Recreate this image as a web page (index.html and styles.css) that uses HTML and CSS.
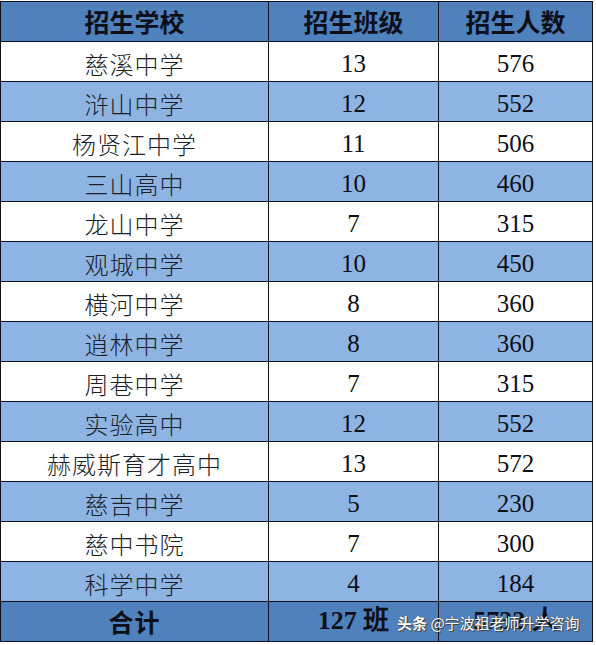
FILE: index.html
```html
<!DOCTYPE html>
<html lang="zh-CN">
<head>
<meta charset="utf-8">
<title>招生计划</title>
<link rel="stylesheet" href="styles.css">
</head>
<body>
<div class="page">
  <table class="plan">
    <colgroup>
      <col class="c1"><col class="c2"><col class="c3">
    </colgroup>
    <thead>
      <tr class="head"><th>招生学校</th><th>招生班级</th><th>招生人数</th></tr>
    </thead>
    <tbody>
      <tr class="w"><td class="cn">慈溪中学</td><td class="num">13</td><td class="num">576</td></tr>
      <tr class="b"><td class="cn">浒山中学</td><td class="num">12</td><td class="num">552</td></tr>
      <tr class="w"><td class="cn">杨贤江中学</td><td class="num">11</td><td class="num">506</td></tr>
      <tr class="b"><td class="cn">三山高中</td><td class="num">10</td><td class="num">460</td></tr>
      <tr class="w"><td class="cn">龙山中学</td><td class="num">7</td><td class="num">315</td></tr>
      <tr class="b"><td class="cn">观城中学</td><td class="num">10</td><td class="num">450</td></tr>
      <tr class="w"><td class="cn">横河中学</td><td class="num">8</td><td class="num">360</td></tr>
      <tr class="b"><td class="cn">逍林中学</td><td class="num">8</td><td class="num">360</td></tr>
      <tr class="w"><td class="cn">周巷中学</td><td class="num">7</td><td class="num">315</td></tr>
      <tr class="b"><td class="cn">实验高中</td><td class="num">12</td><td class="num">552</td></tr>
      <tr class="w"><td class="cn">赫威斯育才高中</td><td class="num">13</td><td class="num">572</td></tr>
      <tr class="b"><td class="cn">慈吉中学</td><td class="num">5</td><td class="num">230</td></tr>
      <tr class="w"><td class="cn">慈中书院</td><td class="num">7</td><td class="num">300</td></tr>
      <tr class="b"><td class="cn">科学中学</td><td class="num">4</td><td class="num">184</td></tr>
    </tbody>
    <tfoot>
      <tr class="foot"><td class="cn">合计</td><td class="num">127 班</td><td class="num">5732 人</td></tr>
    </tfoot>
  </table>
  <div class="watermark"><span class="wm-brand">头条</span> @宁波祖老师升学咨询</div>
</div>
</body>
</html>
```
FILE: styles.css
```css
html, body {
  margin: 0;
  padding: 0;
  background: #ffffff;
}
.page {
  position: relative;
  width: 596px;
  height: 645px;
  padding-top: 1px;
  box-sizing: border-box;
  overflow: hidden;
}
.plan {
  border-collapse: collapse;
  table-layout: fixed;
  width: 592px;
  color: #0b0f18;
}
.c1 { width: 268px; }
.c2 { width: 170px; }
.c3 { width: 154px; }
.plan th, .plan td {
  border: 1px solid #0a0f1a;
  text-align: center;
  vertical-align: top;
  padding: 0;
  line-height: 30px;
}
.head th {
  background: #4f81bd;
  font-family: "Noto Sans CJK SC", sans-serif;
  font-weight: 700;
  font-size: 25px;
  height: 35px;
  padding-top: 4px;
}
.w td { background: #ffffff; }
.b td { background: #8db4e2; }
.cn {
  font-family: "Noto Sans CJK SC", sans-serif;
  font-weight: 300;
  font-size: 24px;
  letter-spacing: 1px;
  color: #1a1f28;
}
.num {
  font-family: "Liberation Serif", "Times New Roman", serif;
  font-size: 25px;
}
tbody td {
  height: 32px;
  padding-top: 7px !important;
}
.foot td {
  background: #4f81bd;
  font-weight: 700;
  height: 35px;
  padding-top: 4px !important;
  color: #0b0f18;
}
.foot .cn { font-size: 25px; }
.foot .num { font-size: 26px; }
.watermark {
  position: absolute;
  left: 397px;
  top: 612px;
  font-family: "Noto Sans CJK SC", sans-serif;
  font-size: 15px;
  line-height: 22px;
  color: #ffffff;
  text-shadow: 0 0 1px #333, 1px 1px 1px #444;
  white-space: nowrap;
}
.wm-brand { font-weight: 700; }
```
